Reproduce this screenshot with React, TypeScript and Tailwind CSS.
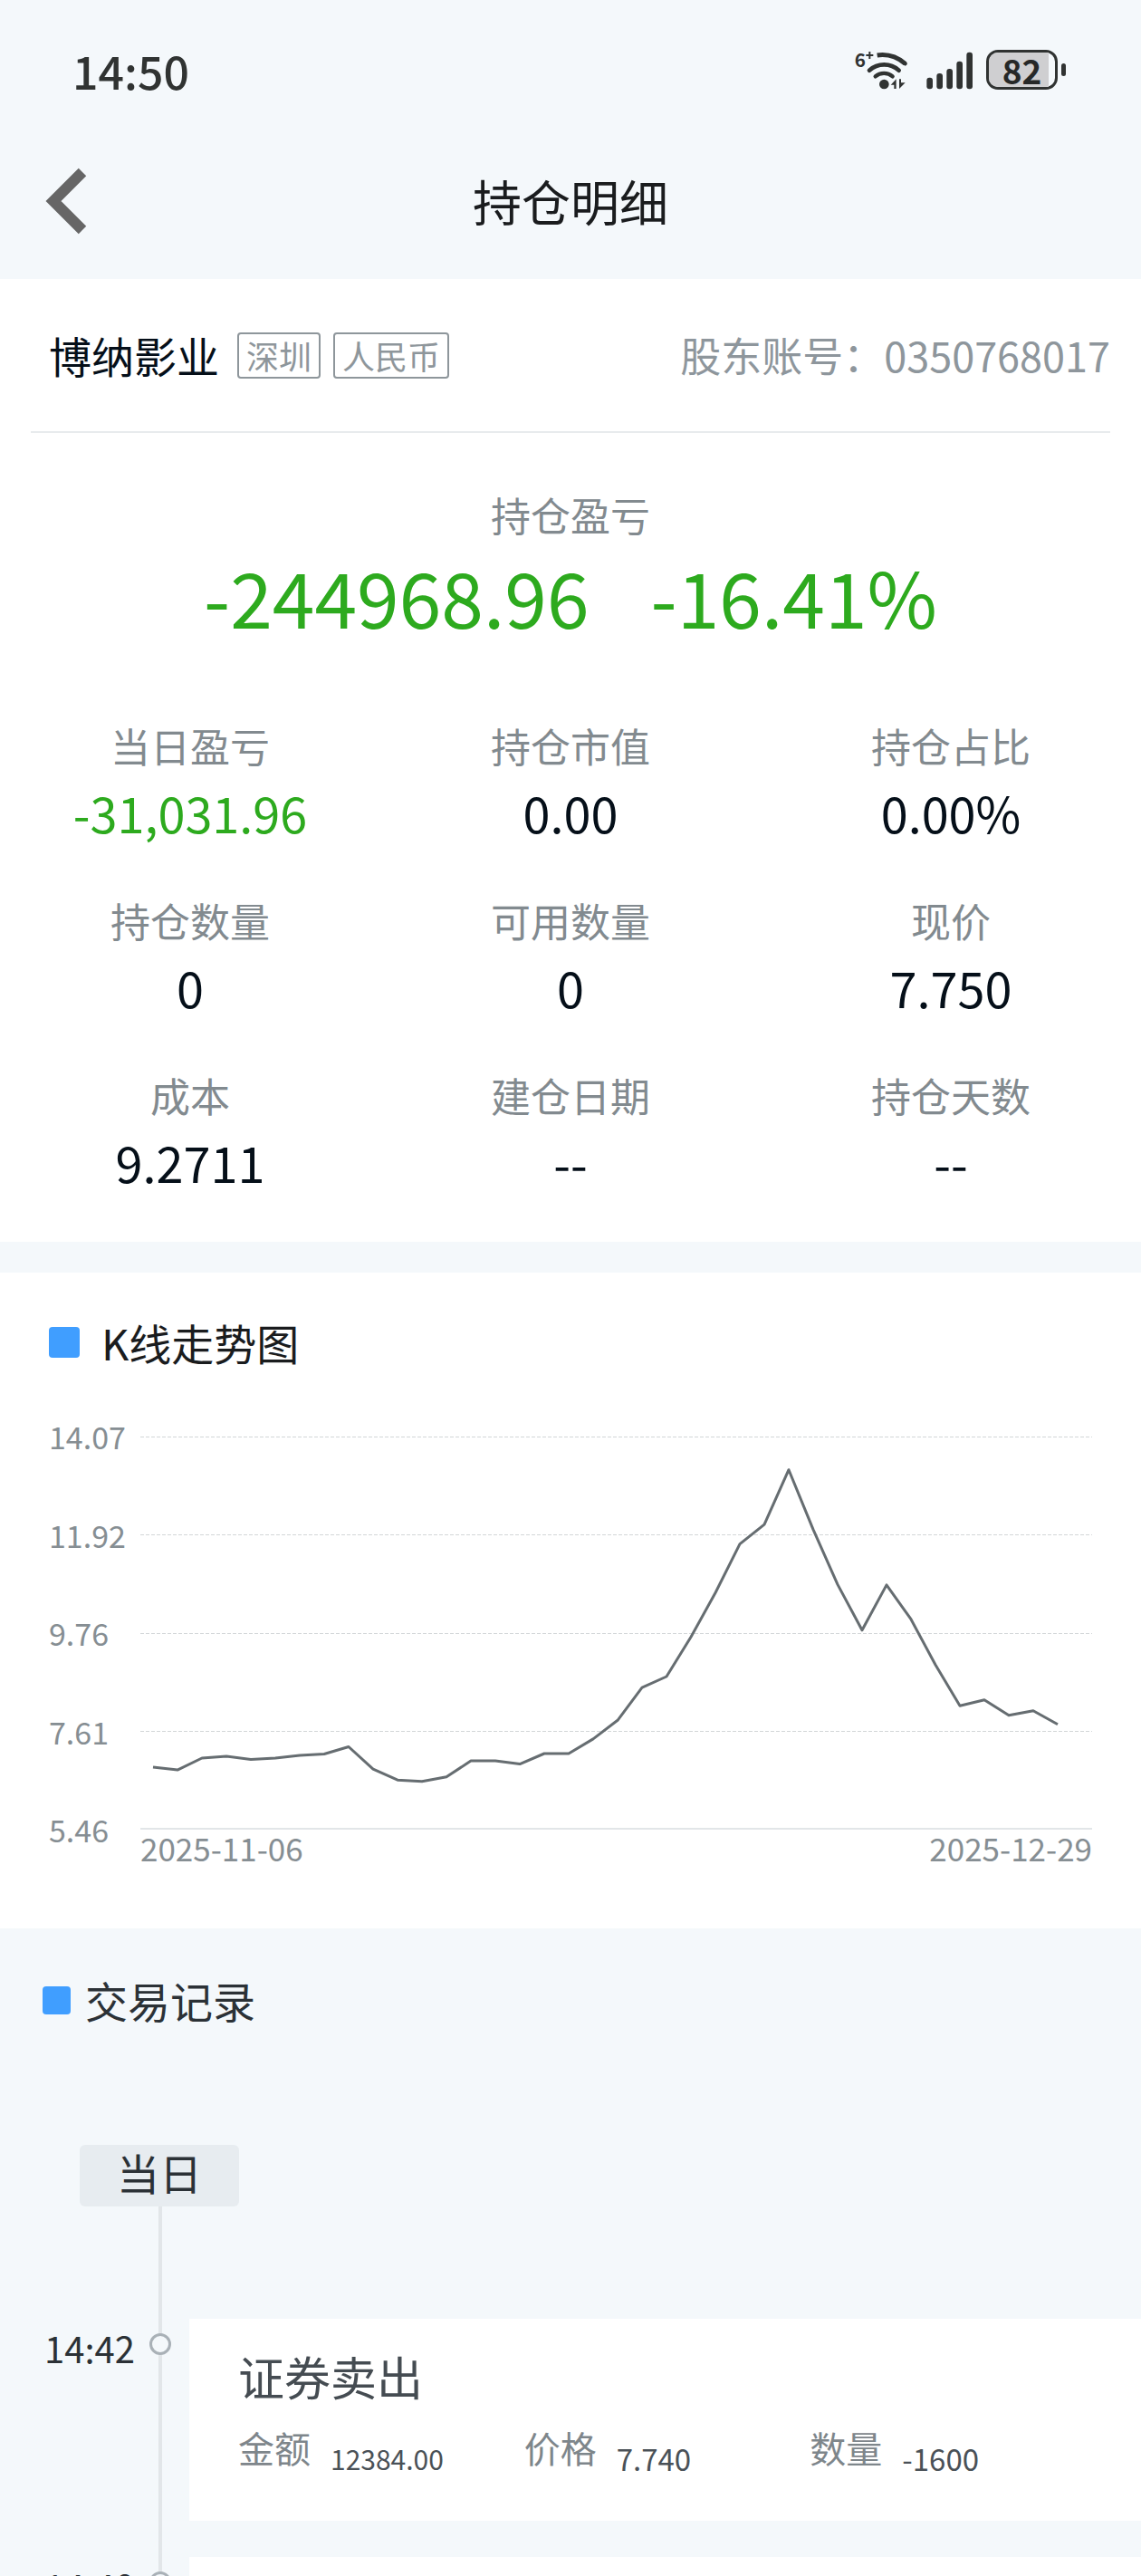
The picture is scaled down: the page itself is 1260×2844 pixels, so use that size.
import React from 'react'

type Stat = { label: string; value: string; down?: boolean }

type Trade = {
  time: string
  title?: string
  amount?: string
  price?: string
  quantity?: string
}

const stats: Stat[] = [
  { label: '当日盈亏', value: '-31,031.96', down: true },
  { label: '持仓市值', value: '0.00' },
  { label: '持仓占比', value: '0.00%' },
  { label: '持仓数量', value: '0' },
  { label: '可用数量', value: '0' },
  { label: '现价', value: '7.750' },
  { label: '成本', value: '9.2711' },
  { label: '建仓日期', value: '--' },
  { label: '持仓天数', value: '--' },
]

const trades: Trade[] = [
  { time: '14:42', title: '证券卖出', amount: '12384.00', price: '7.740', quantity: '-1600' },
  { time: '14:40' },
]

const axisLabels = ['14.07', '11.92', '9.76', '7.61', '5.46']

const closes = [
  6.81, 6.75, 7.01, 7.05, 6.98, 7.01, 7.07, 7.1, 7.26, 6.77, 6.53, 6.5, 6.6, 6.95, 6.95, 6.88, 7.11, 7.11, 7.43,
  7.84, 8.56, 8.8, 9.67, 10.64, 11.71, 12.14, 13.34, 12.03, 10.82, 9.82, 10.81, 10.06, 9.06, 8.16, 8.29, 7.95, 8.05,
  7.75,
]

const CHART_W = 1051
const CHART_H = 434
const MAX = 14.07
const MIN = 5.46

const points = closes
  .map((close, i) => {
    const x = 14 + i * 27
    const y = ((MAX - close) / (MAX - MIN)) * (CHART_H - 1)
    return `${x},${y.toFixed(1)}`
  })
  .join(' ')

function WifiIcon() {
  return (
    <svg
      viewBox="130 75 174 135"
      className="h-[45px] w-[58px] overflow-visible"
      fill="none"
      stroke="#303332"
      strokeLinecap="round"
    >
      <text x="126" y="132" fontSize="62" fontWeight="700" fill="#303332" stroke="none">
        6
      </text>
      <path d="M164 93h24M176 81v24" strokeWidth="6" strokeLinecap="butt" />
      <path d="M201 93c34-5 66 5 93 28" strokeWidth="15" strokeLinecap="butt" />
      <path d="M293 120l1 1" strokeWidth="13" />
      <path d="M175 143c28-25 70-25 98 0" strokeWidth="14" />
      <path d="M195 163c16-14 41-14 57 0" strokeWidth="13" />
      <circle cx="224" cy="189" r="16" fill="#303332" stroke="none" />
      <path d="M246 191l18-19v32h-7v-13zM274 204v-32h6v12h14z" fill="#303332" stroke="none" />
    </svg>
  )
}

function SignalIcon() {
  return (
    <svg viewBox="366 75 153 135" className="h-[45px] w-[51px]" fill="#303332">
      <rect x="367" y="167" width="20" height="38" rx="9" />
      <rect x="400" y="153" width="20" height="52" rx="9" />
      <rect x="433" y="138" width="20" height="67" rx="9" />
      <rect x="466" y="113" width="20" height="92" rx="9" />
      <rect x="499" y="83" width="20" height="122" rx="9" />
    </svg>
  )
}

function Battery({ level }: { level: number }) {
  return (
    <div className="flex items-center gap-1">
      <div className="relative h-[44px] w-[79px] rounded-[13px] border-[3px] border-[#303332]">
        <div className="h-full rounded-l-[10px] bg-[#cfcfd1]" style={{ width: `${level + 9}%` }} />
        <span className="absolute inset-0 flex items-center justify-center text-[37px] leading-none font-bold text-[#262828]">
          {level}
        </span>
      </div>
      <div className="h-[14px] w-[5px] rounded-full bg-[#303332]" />
    </div>
  )
}

function StatusBar() {
  return (
    <div className="flex h-[154px] items-center justify-between pr-[83px] pl-[80px]">
      <span className="text-[50px] leading-[60px] font-medium text-[#303332]">14:50</span>
      <div className="flex items-center">
        <WifiIcon />
        <div className="mr-[15px] ml-[20px] flex">
          <SignalIcon />
        </div>
        <Battery level={82} />
      </div>
    </div>
  )
}

function KLineChart() {
  return (
    <div className="flex px-[54px]">
      <div className="-my-5 flex h-[474px] w-[101px] shrink-0 flex-col justify-between text-[34px] leading-[40px] text-[#868e93]">
        {axisLabels.map((label) => (
          <span key={label}>{label}</span>
        ))}
      </div>
      <div className="flex-1">
        <svg
          viewBox={`0 0 ${CHART_W} ${CHART_H}`}
          preserveAspectRatio="none"
          className="block h-[434px] w-full overflow-visible"
          fill="none"
        >
          {[0, 1, 2, 3].map((i) => (
            <line
              key={i}
              x1="0"
              x2={CHART_W}
              y1={Math.round((i * 433) / 4) + 0.5}
              y2={Math.round((i * 433) / 4) + 0.5}
              stroke="#d3d6d8"
              strokeDasharray="4 2"
            />
          ))}
          <line x1="0" x2={CHART_W} y1="433" y2="433" stroke="#e2e6e8" strokeWidth="2" />
          <polyline points={points} stroke="#666d71" strokeWidth="3" strokeLinejoin="round" />
        </svg>
        <div className="flex justify-between text-[35px] leading-[40px] text-[#868e93]">
          <span>2025-11-06</span>
          <span>2025-12-29</span>
        </div>
      </div>
    </div>
  )
}

function TradeField({ label, value, small }: { label: string; value?: string; small?: boolean }) {
  return (
    <div className="flex items-end gap-[22px]">
      <dt className="text-[40px] leading-[60px] text-[#7e868b]">{label}</dt>
      <dd className={small ? 'text-[30px] leading-[36px] text-[#4a5157]' : 'text-[33px] leading-[36px] text-[#4a5157]'}>
        {value}
      </dd>
    </div>
  )
}

function TradeRow({ trade }: { trade: Trade }) {
  return (
    <li className="flex">
      <div className="w-[157px] shrink-0 pt-0.5 pr-2 text-right text-[40px] leading-[60px] text-[#2b3136]">
        {trade.time}
      </div>
      <div className="relative flex w-[40px] shrink-0 justify-center">
        <div className="w-1 bg-[#e2e6e9]" />
        <div className="absolute top-4 h-6 w-6 rounded-full border-[3px] border-[#a9b1b7] bg-[#f4f8fb]" />
      </div>
      <div className="ml-3 flex-1 pb-10">
        <div className="min-h-[223px] bg-white pt-[33px] pr-[50px] pl-[54px]">
          {trade.title && (
            <>
              <h3 className="text-[51px] leading-[60px] text-[#454c52]">{trade.title}</h3>
              <dl className="mt-[19px] grid grid-cols-3">
                <TradeField label="金额" value={trade.amount} small />
                <TradeField label="价格" value={trade.price} />
                <TradeField label="数量" value={trade.quantity} />
              </dl>
            </>
          )}
        </div>
      </div>
    </li>
  )
}

export default function App() {
  return (
    <div className="h-screen overflow-hidden bg-[#f4f8fb] font-['Noto_Sans_CJK_SC',sans-serif] text-[#050f19]">
      <header className="pb-[18px]">
        <StatusBar />
        <div className="grid h-[136px] grid-cols-[1fr_auto_1fr] items-center">
          <button type="button" aria-label="返回" className="ml-[50px] justify-self-start">
            <svg viewBox="0 0 46 74" className="h-[74px] w-[46px]" fill="none" stroke="#666" strokeWidth="12">
              <path d="M41 5L9 37l32 32" />
            </svg>
          </button>
          <h1 className="text-[54px] leading-[60px] text-[#1a1c1e]">持仓明细</h1>
        </div>
      </header>

      <section className="bg-white pb-[58px]">
        <div className="mx-[34px] flex h-[170px] items-center justify-between border-b-2 border-[#e8ebed] pl-5">
          <div className="flex items-center gap-[14px]">
            <h2 className="mr-[6px] text-[47px] leading-[60px]">博纳影业</h2>
            {['深圳', '人民币'].map((tag) => (
              <span
                key={tag}
                className="rounded-[4px] border-2 border-[#8e969b] px-2 text-[36px] leading-[47px] text-[#8e969b]"
              >
                {tag}
              </span>
            ))}
          </div>
          <p className="text-[45px] leading-[60px] text-[#8e969c]">股东账号：0350768017</p>
        </div>

        <div className="pt-[60px] text-center">
          <p className="text-[44px] leading-[60px] text-[#828a8f]">持仓盈亏</p>
          <p className="mt-[10px] flex justify-center gap-[68px] text-[84px] leading-[100px] text-[#2daa1e]">
            <span>-244968.96</span>
            <span>-16.41%</span>
          </p>
        </div>

        <dl className="mt-[85px] grid grid-cols-3 gap-y-[59px] text-center">
          {stats.map((stat) => (
            <div key={stat.label} className="flex flex-col gap-[14px]">
              <dt className="text-[44px] leading-[60px] text-[#828a8f]">{stat.label}</dt>
              <dd className={stat.down ? 'text-[54px] leading-[60px] text-[#2daa1e]' : 'text-[54px] leading-[60px]'}>
                {stat.value}
              </dd>
            </div>
          ))}
        </dl>
      </section>

      <section className="mt-[34px] bg-white pt-[47px] pb-[69px]">
        <div className="mb-[74px] flex items-center gap-6 pl-[54px]">
          <span className="h-[34px] w-[34px] rounded-[4px] bg-[#409eff]" />
          <h2 className="text-[47px] leading-[60px] text-[#1a1c1e]">K线走势图</h2>
        </div>
        <KLineChart />
      </section>

      <section className="pt-[49px]">
        <div className="flex items-center gap-4 pl-[47px]">
          <span className="h-[31px] w-[31px] rounded-[4px] bg-[#409eff]" />
          <h2 className="text-[47px] leading-[60px] text-[#2b3136]">交易记录</h2>
        </div>
        <div className="mt-[130px] ml-[88px] flex w-[176px] flex-col">
          <span className="rounded-[6px] bg-[#e7ecf0] pb-2 text-center text-[47px] leading-[60px] text-[#2b3136]">
            当日
          </span>
          <span className="ml-[87px] h-[124px] w-1 bg-[#e2e6e9]" />
        </div>
        <ol>
          {trades.map((trade) => (
            <TradeRow key={trade.time} trade={trade} />
          ))}
        </ol>
      </section>
    </div>
  )
}
